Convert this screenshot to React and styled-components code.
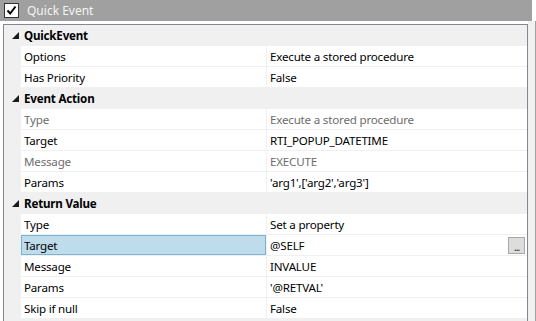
import React from 'react';
import styled, { createGlobalStyle } from 'styled-components';

const GlobalStyle = createGlobalStyle`
  html, body {
    margin: 0;
    padding: 0;
    background: #ffffff;
  }
  body {
    font-family: "Noto Sans", "Open Sans", sans-serif;
    font-size: 11.6px;
    letter-spacing: -0.2px;
  }
`;

const Page = styled.div`
  width: 536px;
  height: 321px;
  overflow: hidden;
  display: flex;
  flex-direction: column;
  background: #ffffff;
`;

const TitleBar = styled.div`
  height: 21px;
  width: 532px;
  background: #a0a0a0;
  display: flex;
  align-items: center;
  gap: 8px;
  padding-left: 4px;
  box-sizing: border-box;
  color: #f4f4f4;
  font-size: 12px;
  letter-spacing: 0;
`;

const CheckBox = styled.span`
  width: 13px;
  height: 13px;
  background: #ffffff;
  border: 1px solid #333;
  display: flex;
  align-items: center;
  justify-content: center;
`;

const Body = styled.div`
  flex: 1;
  display: flex;
  padding-top: 3px;
  padding-left: 3px;
  background: #ffffff;
`;

const Grid = styled.div`
  width: 526px;
  border: 1px solid #828790;
  border-bottom: none;
  background: #f0f0f0;
`;

const Side = styled.div`
  width: 7px;
  background: #f0f0f0;
  border-right: 1px solid #a0a0a0;
  margin-top: -3px;
`;

const CategoryRow = styled.div`
  height: 21px;
  display: flex;
  align-items: center;
  background: #f0f0f0;
  font-weight: bold;
  color: #000;
`;

const Toggle = styled.span`
  width: 20px;
  display: flex;
  justify-content: center;
  padding-left: 2px;
  box-sizing: border-box;
`;

const PropRow = styled.div`
  height: 21px;
  display: grid;
  grid-template-columns: 17px 245px 1px 1fr;
  background: #f0f0f0;
`;

const NameCell = styled.div`
  height: 20px;
  display: flex;
  align-items: center;
  box-sizing: border-box;
  background: ${p => (p.$selected ? '#bedcec' : '#ffffff')};
  border: ${p => (p.$selected ? '1px solid #7ab3d3' : 'none')};
  padding-left: ${p => (p.$selected ? '2px' : '3px')};
  color: ${p => (p.$disabled ? '#6d6d6d' : '#000')};
  white-space: nowrap;
`;

const ValueCell = styled.div`
  height: 20px;
  display: flex;
  align-items: center;
  justify-content: space-between;
  padding-left: 3px;
  padding-right: 2px;
  box-sizing: border-box;
  background: #ffffff;
  color: ${p => (p.$disabled ? '#6d6d6d' : '#000')};
  white-space: nowrap;
`;

const Divider = styled.div`
  background: #f0f0f0;
`;

const EllipsisButton = styled.span`
  width: 15px;
  height: 15px;
  margin-top: 1px;
  background: #dddddd;
  border: 1px solid #a8a8a8;
  display: flex;
  align-items: flex-end;
  justify-content: center;
  font-size: 10px;
  line-height: 11px;
  letter-spacing: -1px;
  color: #222;
`;

const Arrow = () => (
  <svg width="7" height="7" viewBox="0 0 7 7">
    <polygon points="7,0 7,7 0,7" fill="#1a1a1a" />
  </svg>
);

const Check = () => (
  <svg width="11" height="11" viewBox="0 0 11 11">
    <polyline points="1.5,5.5 4.2,8.5 9.5,1.5" fill="none" stroke="#000" strokeWidth="2" />
  </svg>
);

const data = [
  {
    title: 'QuickEvent',
    rows: [
      { name: 'Options', value: 'Execute a stored procedure' },
      { name: 'Has Priority', value: 'False' },
    ],
  },
  {
    title: 'Event Action',
    rows: [
      { name: 'Type', value: 'Execute a stored procedure', disabled: true },
      { name: 'Target', value: 'RTI_POPUP_DATETIME' },
      { name: 'Message', value: 'EXECUTE', disabled: true },
      { name: 'Params', value: "'arg1',['arg2','arg3']" },
    ],
  },
  {
    title: 'Return Value',
    rows: [
      { name: 'Type', value: 'Set a property' },
      { name: 'Target', value: '@SELF', selected: true },
      { name: 'Message', value: 'INVALUE' },
      { name: 'Params', value: "'@RETVAL'" },
      { name: 'Skip if null', value: 'False' },
    ],
  },
];

export default function App() {
  return (
    <Page>
      <GlobalStyle />
      <TitleBar>
        <CheckBox><Check /></CheckBox>
        <span>Quick Event</span>
      </TitleBar>
      <Body>
        <Grid>
          {data.map(cat => (
            <React.Fragment key={cat.title}>
              <CategoryRow>
                <Toggle><Arrow /></Toggle>
                <span>{cat.title}</span>
              </CategoryRow>
              {cat.rows.map(r => (
                <PropRow key={cat.title + r.name}>
                  <div />
                  <NameCell $selected={r.selected} $disabled={r.disabled}>{r.name}</NameCell>
                  <Divider />
                  <ValueCell $disabled={r.disabled}>
                    <span>{r.value}</span>
                    {r.selected && <EllipsisButton>...</EllipsisButton>}
                  </ValueCell>
                </PropRow>
              ))}
            </React.Fragment>
          ))}
        </Grid>
        <Side />
      </Body>
    </Page>
  );
}
